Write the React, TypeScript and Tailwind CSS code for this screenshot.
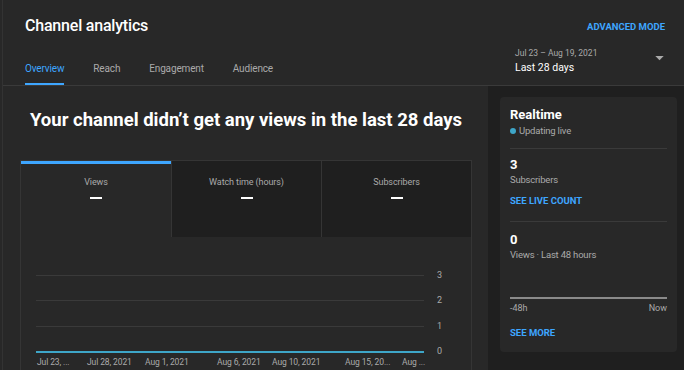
import React from "react";

const tabs = ["Overview", "Reach", "Engagement", "Audience"];

const metrics = [
  { label: "Views", active: true },
  { label: "Watch time (hours)", active: false },
  { label: "Subscribers", active: false },
];

const xLabels = [
  { text: "Jul 23, ...", left: 16 },
  { text: "Jul 28, 2021", left: 66 },
  { text: "Aug 1, 2021", left: 124 },
  { text: "Aug 6, 2021", left: 196 },
  { text: "Aug 10, 2021", left: 251 },
  { text: "Aug 15, 20...", left: 324 },
  { text: "Aug ...", left: 381 },
];

const yTicks = [
  { label: "3", top: 38 },
  { label: "2", top: 63 },
  { label: "1", top: 89 },
  { label: "0", top: 114 },
];

function Header() {
  return (
    <header className="h-[86px] shrink-0 border-b border-[#3a3a3a] pl-[22px] pr-[19px] flex flex-col">
      <div className="flex items-start justify-between pt-[15px]">
        <h1 className="text-[16px] leading-[22px] font-medium text-white tracking-[-0.2px]">Channel analytics</h1>
        <button className="text-[9.5px] font-bold text-[#3ea6ff] mt-[5px]">ADVANCED MODE</button>
      </div>
      <div className="flex items-end justify-between mt-auto">
        <nav className="flex gap-[29px] text-[10px] tracking-[-0.15px]">
          {tabs.map((t, i) => (
            <div
              key={t}
              className={
                "pb-[7px] border-b-2 " +
                (i === 0 ? "text-[#3ea6ff] border-[#3ea6ff]" : "text-[#aaaaaa] border-transparent")
              }
            >
              {t}
            </div>
          ))}
        </nav>
        <div className="w-[150px] flex items-center justify-between pb-[11px]">
          <div className="leading-tight">
            <div className="text-[8.5px] text-[#aaaaaa]">Jul 23 – Aug 19, 2021</div>
            <div className="text-[10.5px] text-white mt-[2px]">Last 28 days</div>
          </div>
          <svg width="9" height="5" viewBox="0 0 10 6" className="mt-[-6px] mr-[1px]">
            <path d="M0 0h10L5 5z" fill="#aaaaaa" />
          </svg>
        </div>
      </div>
    </header>
  );
}

function Chart() {
  return (
    <div className="relative h-[134px]">
      {yTicks.map((y, i) => (
        <React.Fragment key={y.label}>
          <div
            className={"absolute left-[15px] w-[388px] " + (i === 3 ? "h-[2px] bg-[#3ea6c8]" : "h-px bg-[#3a3a3a]")}
            style={{ top: y.top }}
          />
          <div className="absolute left-[416px] text-[9px] text-[#aaaaaa] leading-none" style={{ top: y.top - 4 }}>
            {y.label}
          </div>
        </React.Fragment>
      ))}
      {xLabels.map((x) => (
        <div
          key={x.text}
          className="absolute top-[121px] text-[8.5px] text-[#aaaaaa] leading-none whitespace-nowrap tracking-[-0.1px]"
          style={{ left: x.left }}
        >
          {x.text}
        </div>
      ))}
    </div>
  );
}

function Realtime() {
  return (
    <div className="bg-[#282828] rounded-[4px] px-[10px] pt-[10px] pb-[12px] flex flex-col">
      <div className="text-[13px] font-bold text-white leading-[16px]">Realtime</div>
      <div className="flex items-center gap-[3px] text-[9.5px] text-[#aaaaaa] leading-[14px] mt-[1px] tracking-[-0.2px]">
        <span className="w-[6px] h-[6px] rounded-full bg-[#3ea6c8]" />
        Updating live
      </div>
      <div className="h-px bg-[#3a3a3a] mt-[10px]" />
      <div className="text-[13px] font-bold text-white mt-[8px] leading-[16px]">3</div>
      <div className="text-[9.5px] text-[#aaaaaa] leading-[14px] tracking-[-0.2px]">Subscribers</div>
      <div className="text-[9.5px] font-bold text-[#3ea6ff] mt-[7px] leading-[14px]">SEE LIVE COUNT</div>
      <div className="h-px bg-[#3a3a3a] mt-[13px]" />
      <div className="text-[13px] font-bold text-white mt-[10px] leading-[16px]">0</div>
      <div className="text-[9.5px] text-[#aaaaaa] leading-[14px] tracking-[-0.2px]">Views · Last 48 hours</div>
      <div className="h-[2px] bg-[#8a8a8a] mt-[35px]" />
      <div className="flex justify-between text-[9px] text-[#aaaaaa] mt-[3px] leading-[12px]">
        <span>-48h</span>
        <span>Now</span>
      </div>
      <div className="text-[9.5px] font-bold text-[#3ea6ff] mt-[12px] leading-[14px]">SEE MORE</div>
    </div>
  );
}

export default function App() {
  return (
    <div className="w-[684px] h-[370px] overflow-hidden bg-[#282828] pl-[2px]" style={{ fontFamily: "Roboto, sans-serif" }}>
      <div className="h-full border-l border-[#333333] flex flex-col">
        <Header />
        <div className="flex flex-1 min-h-0">
          <main className="w-[485px] pl-[17px] pr-[16px] flex flex-col">
            <h2 className="text-[18.5px] font-bold text-white text-center mt-[21px] leading-[26px] whitespace-nowrap">
              Your channel didn’t get any views in the last 28 days
            </h2>
            <div className="mt-[27px] border border-[#353535] border-b-0 flex-1">
              <div className="grid grid-cols-3">
                {metrics.map((m) => (
                  <div
                    key={m.label}
                    className={
                      "h-[76px] flex flex-col items-center " +
                      (m.active ? "border-t-[3px] border-[#3ea6ff] pt-[12px]" : "bg-[#1f1f1f] border-l border-[#353535] pt-[15px]")
                    }
                  >
                    <div className="text-[9px] text-[#aaaaaa] leading-[12px] tracking-[-0.1px]">{m.label}</div>
                    <div className="w-[12px] h-[2px] bg-white mt-[9px]" />
                  </div>
                ))}
              </div>
              <Chart />
            </div>
          </main>
          <aside className="flex-1 bg-[#1f1f1f] pl-[12px] pr-[7px] pt-[11px]">
            <Realtime />
          </aside>
        </div>
      </div>
    </div>
  );
}
